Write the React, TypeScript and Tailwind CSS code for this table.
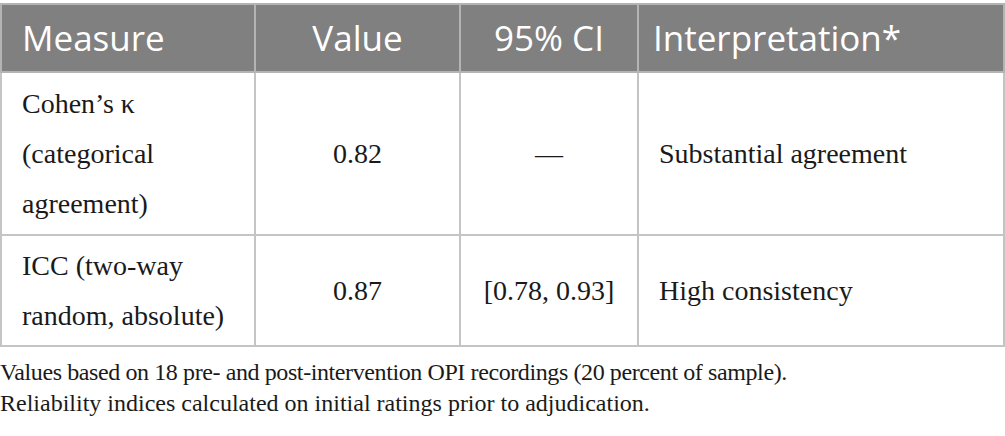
import React from "react";

const serif = { fontFamily: '"Liberation Serif", "Times New Roman", serif' };

export default function App() {
  return (
    <div className="w-[1005px] h-[436px] bg-white overflow-hidden pt-[3px]">
      <table
        className="border-collapse w-[1003px] table-fixed"
        style={{ fontFamily: '"Open Sans", sans-serif' }}
      >
        <colgroup>
          <col className="w-[254px]" />
          <col className="w-[205px]" />
          <col className="w-[178px]" />
          <col className="w-[366px]" />
        </colgroup>
        <thead>
          <tr className="bg-[#808080] text-white text-[35px] leading-[64px] h-[68px]">
            <th className="border-2 border-[#b4b4b4] text-left font-normal pl-[20px] pr-2">Measure</th>
            <th className="border-2 border-[#b4b4b4] text-center font-normal">Value</th>
            <th className="border-2 border-[#b4b4b4] text-center font-normal">95% CI</th>
            <th className="border-2 border-[#b4b4b4] text-left font-normal pl-[14px]">Interpretation*</th>
          </tr>
        </thead>
        <tbody className="text-[#1a1a1a] text-[28px] leading-[50px]" style={serif}>
          <tr className="h-[163px]">
            <td className="border-2 border-[#c4c4c4] align-middle pl-[20px] pr-2">
              Cohen’s κ
              <br />
              (categorical
              <br />
              agreement)
            </td>
            <td className="border-2 border-[#c4c4c4] text-center">0.82</td>
            <td className="border-2 border-[#c4c4c4] text-center">—</td>
            <td className="border-2 border-[#c4c4c4] pl-[20px]">Substantial agreement</td>
          </tr>
          <tr className="h-[111px]">
            <td className="border-2 border-[#c4c4c4] align-middle pl-[20px] pr-2">
              ICC (two-way
              <br />
              random, absolute)
            </td>
            <td className="border-2 border-[#c4c4c4] text-center">0.87</td>
            <td className="border-2 border-[#c4c4c4] text-center">[0.78, 0.93]</td>
            <td className="border-2 border-[#c4c4c4] pl-[20px]">High consistency</td>
          </tr>
        </tbody>
      </table>
      <div className="mt-[10px] text-[#1a1a1a] text-[24px] leading-[31px]" style={serif}>
        <p className="tracking-[-0.4px]">Values based on 18 pre- and post-intervention OPI recordings (20 percent of sample).</p>
        <p>Reliability indices calculated on initial ratings prior to adjudication.</p>
      </div>
    </div>
  );
}
